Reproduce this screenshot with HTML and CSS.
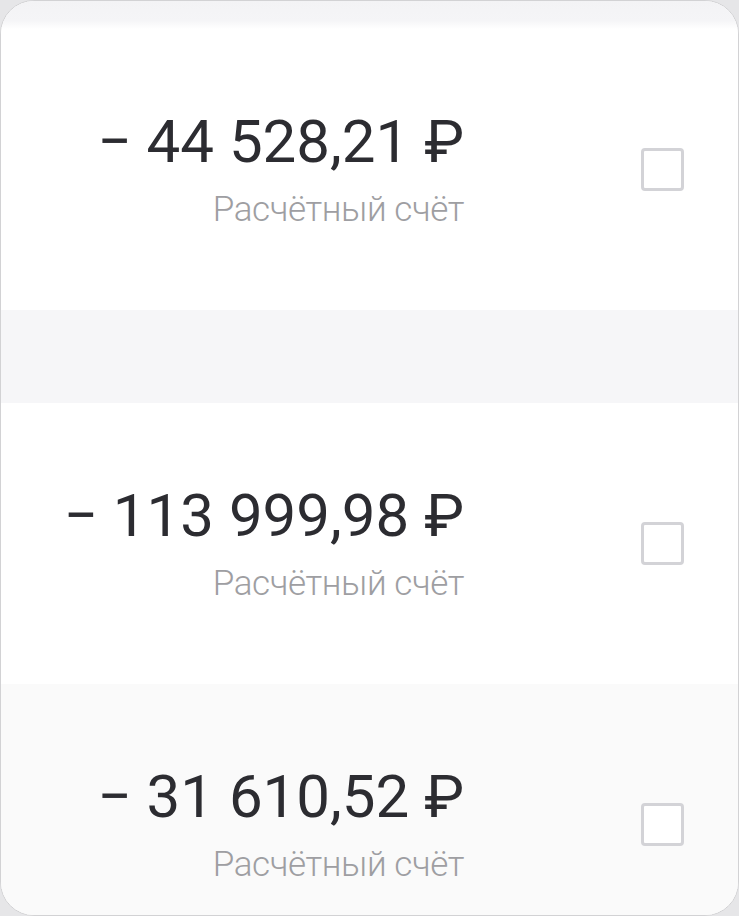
FILE: index.html
```html
<!DOCTYPE html>
<html lang="ru">
<head>
<meta charset="utf-8">
<link rel="stylesheet" href="styles.css">
</head>
<body>
<div class="frame">
  <div class="top-strip"></div>
  <div class="row row-white">
    <div class="info">
      <div class="amount">− 44 528,21 ₽</div>
      <div class="account">Расчётный счёт</div>
    </div>
    <div class="checkbox"></div>
  </div>
  <div class="gap-band"></div>
  <div class="row row-white">
    <div class="info">
      <div class="amount">− 113 999,98 ₽</div>
      <div class="account">Расчётный счёт</div>
    </div>
    <div class="checkbox"></div>
  </div>
  <div class="row row-soft">
    <div class="info">
      <div class="amount">− 31 610,52 ₽</div>
      <div class="account">Расчётный счёт</div>
    </div>
    <div class="checkbox"></div>
  </div>
</div>
</body>
</html>
```
FILE: styles.css
```css
html, body {
  margin: 0;
  padding: 0;
  background: #e6e6e8;
}
body {
  width: 739px;
  height: 916px;
  overflow: hidden;
}
.frame {
  box-sizing: border-box;
  width: 739px;
  height: 916px;
  border: 1px solid #d2d2d4;
  border-radius: 34px;
  overflow: hidden;
  background: #ffffff;
  font-family: Roboto, "Noto Sans", sans-serif;
}
.top-strip {
  height: 28px;
  background: linear-gradient(#f3f3f5 0%, #f5f5f7 70%, #ffffff 100%);
}
.row {
  box-sizing: border-box;
  height: 281px;
  display: flex;
  align-items: center;
  justify-content: flex-end;
  padding-right: 54px;
  flex-shrink: 0;
}
.row-white { background: #ffffff; }
.row-soft { background: #fafafa; }
.gap-band {
  height: 93px;
  background: #f6f6f8;
}
.info {
  text-align: right;
  margin-right: 177px;
}
.amount {
  font-size: 60px;
  line-height: 60px;
  color: #2c2c31;
  white-space: nowrap;
}
.account {
  margin-top: 20px;
  font-size: 35px;
  font-weight: 300;
  line-height: 35px;
  letter-spacing: -0.4px;
  color: #9e9ea2;
  white-space: nowrap;
}
.checkbox {
  box-sizing: border-box;
  width: 43px;
  height: 43px;
  border: 3px solid #d3d3d7;
  border-radius: 4px;
  background: #ffffff;
  flex-shrink: 0;
}
```
